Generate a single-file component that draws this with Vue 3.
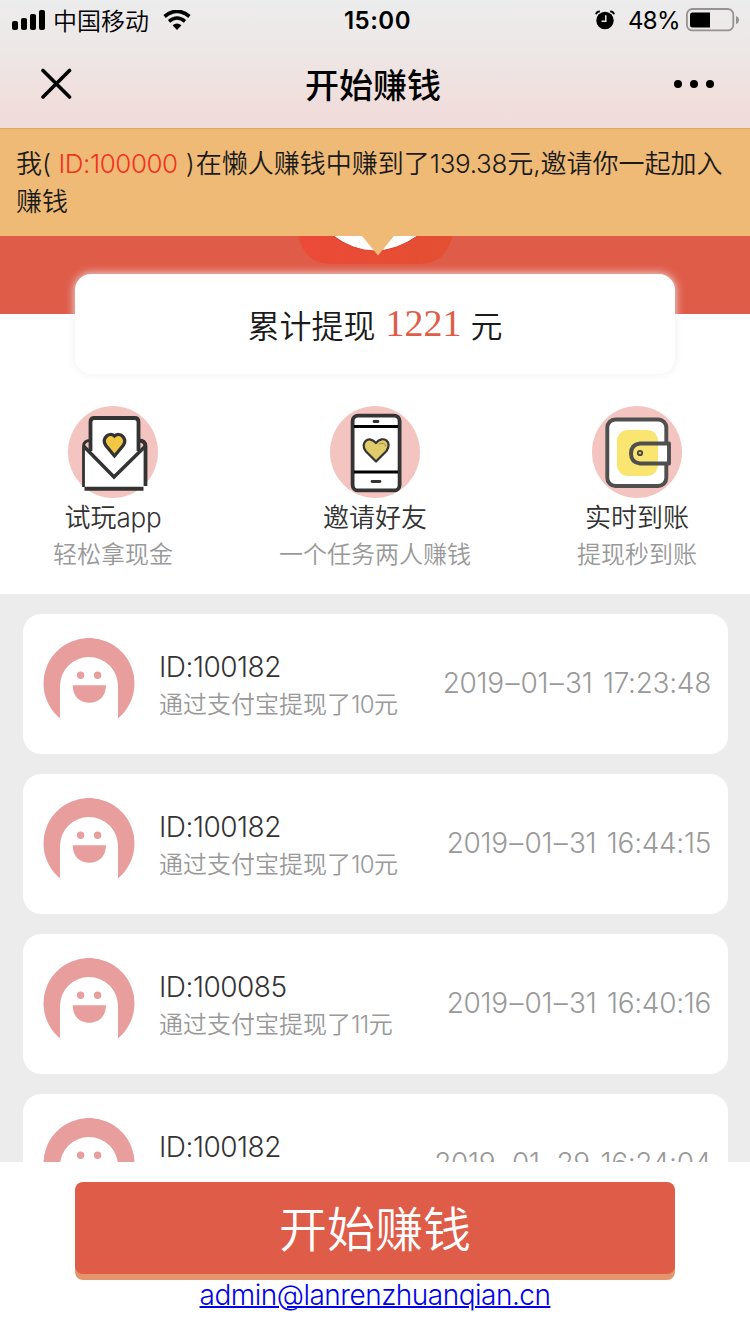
<script setup>
const records = [
  { id: '100182', amount: '10', date: ['2019', '01', '31'], time: '17:23:48' },
  { id: '100182', amount: '10', date: ['2019', '01', '31'], time: '16:44:15' },
  { id: '100085', amount: '11', date: ['2019', '01', '31'], time: '16:40:16' },
  { id: '100182', amount: '10', date: ['2019', '01', '29'], time: '16:24:04' },
]
</script>

<template>
  <div class="page">
    <header class="top">
      <div class="status">
        <div class="carrier">
          <svg width="34" height="20" viewBox="0 0 34 20">
            <rect x="0" y="11" width="6" height="9" rx="2" />
            <rect x="9" y="8" width="6" height="12" rx="2" />
            <rect x="18" y="4" width="6" height="16" rx="2" />
            <rect x="27" y="0" width="6" height="20" rx="2" />
          </svg>
          <span class="operator">中国移动</span>
          <svg width="28" height="20" viewBox="0 0 28 20">
            <path d="M1.6 6.5Q14 -3.7 26.4 6.5" fill="none" stroke="#000" stroke-width="3.8" />
            <path d="M6 11.3Q14 4.7 22 11.3" fill="none" stroke="#000" stroke-width="3.5" />
            <path d="M9.5 15.2Q14 11.8 18.5 15.2L14 20Z" />
          </svg>
        </div>
        <span class="clock">15:00</span>
        <div class="power">
          <svg class="alarm" width="20" height="20" viewBox="0 0 20 20">
            <circle cx="10" cy="10.5" r="8.7" />
            <path d="M.9 4.3Q1.5 1.5 4.9 1.3M15.1 1.3Q18.5 1.5 19.1 4.3" fill="none" stroke="#000" stroke-width="1.8" />
            <path d="M10.8 5.2V11.2H6.6" fill="none" stroke="#eceaea" stroke-width="1.5" />
          </svg>
          <span class="percent">48%</span>
          <svg width="54" height="24" viewBox="0 0 54 24">
            <rect x=".9" y="1" width="46.4" height="21.4" rx="5.5" fill="none" stroke="#969292" stroke-width="1.8" />
            <path d="M6.5 4.500H24V19.500H6.500Q4 19.500 4 17V7Q4 4.500 6.500 4.500Z" />
            <path d="M50 8Q53 9 53 12Q53 15 50 16Z" fill="#969292" />
          </svg>
        </div>
      </div>
      <nav class="nav">
        <svg width="32" height="32" viewBox="0 0 32 32">
          <path d="M3 2.5L29.5 29M29.5 2.5L3 29" stroke="#000" stroke-width="3.6" stroke-linecap="round" />
        </svg>
        <h1>开始赚钱</h1>
        <svg width="42" height="10" viewBox="0 0 42 10">
          <circle cx="5" cy="5" r="4" /><circle cx="21" cy="5" r="4" /><circle cx="37" cy="5" r="4" />
        </svg>
      </nav>
    </header>

    <section class="notice">
      <p><span>我( </span><span class="uid">ID:100000</span><span class="close"> )</span><span>在懒人赚钱中赚到了</span><span class="sum">139.38</span><span>元,邀请你一起加入</span></p>
      <p>赚钱</p>
    </section>

    <section class="hero">
      <svg class="logo" width="156" height="28" viewBox="0 0 156 28">
        <defs>
          <linearGradient id="logo-red"><stop offset="0" stop-color="#eb4a38" /><stop offset="1" stop-color="#e44f32" /></linearGradient>
        </defs>
        <path d="M.5 0H154.500C149 20 138 28 121 28H34C17 28 5 20 .5 0Z" fill="url(#logo-red)" />
        <path d="M34 -1Q76 31 121 -1Z" fill="#fff" stroke="#df3c2a" stroke-width="1" />
        <path d="M64 0H96L80 19.5Z" fill="#efba76" />
      </svg>
    </section>
    <div class="total">累计提现<b>1221</b>元</div>

    <section class="features">
      <div class="feature">
        <svg width="90" height="92" viewBox="0 0 90 92">
          <ellipse cx="45" cy="46" rx="45" ry="46" fill="#f4c5c0" />
          <path d="M16 43L46 66L77 43V81L74 83H18L16 81Z" fill="#fff" />
          <path d="M15.500 81V40Q16 34.500 22 34.500" fill="none" stroke="#333" stroke-width="2.800" />
          <path d="M71 34.500Q77 34.500 77.500 40V80" fill="none" stroke="#333" stroke-width="3.800" />
          <path d="M22 45V14Q22 11 25 11H68Q71 11 71 14V45L46 70Z" fill="#fff" />
          <path d="M22.500 45V16Q22.500 12 26.500 12H66.500Q70.500 12 70.500 16V45" fill="none" stroke="#333" stroke-width="3.800" />
          <path d="M16 40.500L46 71L77 40.500" fill="none" stroke="#333" stroke-width="3.500" />
          <path d="M16.500 82.700H75.500" stroke="#333" stroke-width="4" />
          <path d="M46.500 50L37.500 39C33.500 32 41 25.500 46.500 30C52 25.500 59.500 32 55.500 39Z" fill="#f2c744" stroke="#333" stroke-width="3.300" />
        </svg>
        <h2>试玩<span class="latin">app</span></h2>
        <p>轻松拿现金</p>
      </div>
      <div class="feature">
        <svg width="90" height="92" viewBox="0 0 90 92">
          <ellipse cx="45" cy="46" rx="45" ry="46" fill="#f4c5c0" />
          <rect x="22.6" y="9.6" width="47" height="74.8" rx="5.5" fill="#fff" stroke="#343434" stroke-width="3.8" />
          <path d="M24 20.5H68M24 66H68" stroke="#000" stroke-width="3" />
          <path d="M44 15.5H48M42 75.5H50" stroke="#333" stroke-width="2.8" stroke-linecap="round" />
          <path d="M46 55.5L36 45.5C29 37 39 28.500 46 37C53 28.500 63 36 56.500 45Z" fill="#e0cc6b" stroke="#333" stroke-width="2.2" stroke-linejoin="round" />
          <path d="M49 38Q55 36 56 40.500" fill="none" stroke="#8c7a3b" stroke-width=".8" />
        </svg>
        <h2>邀请好友</h2>
        <p>一个任务两人赚钱</p>
      </div>
      <div class="feature">
        <svg width="90" height="92" viewBox="0 0 90 92">
          <ellipse cx="45" cy="46" rx="45" ry="46" fill="#f4c5c0" />
          <rect x="15.300" y="13.500" width="59" height="66.500" rx="8" fill="#fff" stroke="#4f4f4f" stroke-width="3.900" />
          <rect x="25" y="24" width="41" height="46" rx="11" fill="#fae570" />
          <path d="M48 37.500H77V57.500H48Q39 56 39 47.500Q39 39 48 37.500Z" fill="#fff" />
          <path d="M48 37.500H66V57.500H48Q39 56 39 47.500Q39 39 48 37.500Z" fill="#fae570" />
          <path d="M77 37.500H48Q39 38.500 39 47.500Q39 56.500 48 57.500H77Z" fill="none" stroke="#4f4f4f" stroke-width="3.900" stroke-linejoin="round" />
          <circle cx="48" cy="47" r="2.200" fill="#d9c461" stroke="#444" stroke-width="1.800" />
        </svg>
        <h2>实时到账</h2>
        <p>提现秒到账</p>
      </div>
    </section>

    <main class="records">
      <article v-for="(r, i) in records" :key="i" class="record">
        <svg width="92" height="92" viewBox="0 0 92 92">
          <path d="M17 80.500A45.500 45.500 0 1 1 75 80.500V48A29 29 0 0 0 17 48Z" fill="#e89e9d" />
          <circle cx="37.600" cy="37.300" r="3.700" fill="#e89e9d" /><circle cx="54.600" cy="37.300" r="3.700" fill="#e89e9d" />
          <path d="M29.700 47.300H63C63 59 55 64.800 46.300 64.800S29.700 59 29.700 47.300Z" fill="#e89e9d" />
        </svg>
        <div class="info">
          <h3>ID:{{ r.id }}</h3>
          <p>通过支付宝提现了<span class="amount">{{ r.amount }}</span>元</p>
        </div>
        <time>{{ r.date[0] }}<span class="dash">–</span>{{ r.date[1] }}<span class="dash">–</span>{{ r.date[2] }} {{ r.time }}</time>
      </article>
    </main>

    <footer class="bottom">
      <button type="button">开始赚钱</button>
      <a href="mailto:admin@lanrenzhuanqian.cn">admin@lanrenzhuanqian.cn</a>
    </footer>
  </div>
</template>

<style>
body { margin: 0; overflow: hidden; }
</style>

<style scoped>
.page {
  width: 750px;
  height: 1334px;
  overflow: hidden;
  display: flex;
  flex-direction: column;
  background: #fff;
  color: #1a1a1a;
  font-family: Inter, "Noto Sans CJK SC", sans-serif;
  font-weight: 350;
}
h1, h2, h3, p { margin: 0; font-weight: inherit; }
svg { display: block; flex: none; }
.page > * { flex: none; }
.top { height: 128px; background: linear-gradient(#ececec 0, #ede8e7 35%, #f0dedc 80%, #f0dcdb); color: #000; }
.status { height: 40px; display: grid; grid-template-columns: 1fr auto 1fr; align-items: center; padding: 0 10px 0 12px; }
.carrier, .power { display: flex; align-items: center; }
.operator { font-size: 24px; line-height: 36px; padding-top: 3px; margin: 0 14px 0 7px; }
.power { justify-content: flex-end; }
.clock { font-size: 24px; font-weight: 600; letter-spacing: .5px; padding: 1px 0 0 3px; }
.percent { font-size: 24px; font-weight: 400; letter-spacing: -.6px; padding-top: 1px; margin: 0 6px 0 13px; }
.nav { height: 88px; display: flex; justify-content: space-between; align-items: center; padding: 0 35px 0 40px; }
.nav h1 { font-size: 34px; font-weight: 500; line-height: 84px; padding: 4px 0 0 1px; }
.notice { height: 108px; box-sizing: border-box; padding: 16px 16px 0; background: #efba76; border-top: 1px solid #dba765; font-size: 26px; line-height: 38px; white-space: nowrap; }
.notice p { white-space: pre; }
.uid { color: #f2321f; letter-spacing: -.45px; }
.close { letter-spacing: .8px; }
.sum { letter-spacing: -.3px; }
.latin { letter-spacing: -.2px; }
.amount { letter-spacing: -.6px; }
.hero { height: 78px; background: #df5c49; }
.logo { margin-left: 298px; }
.total { position: relative; width: 600px; height: 100px; margin: -40px auto 0; border-radius: 16px; background: #fff; box-shadow: 0 0 10px #eee; display: flex; justify-content: center; align-items: center; font-size: 32px; }
.total b { font: 400 38px/48px "Liberation Serif", serif; color: #df5c49; margin: 0 9px 2px 10px; }
.features { height: 220px; box-sizing: border-box; padding: 32px 53px 0; display: flex; justify-content: space-between; }
.feature { display: flex; flex-direction: column; align-items: center; }
.feature h2 { margin-top: 1px; font-size: 26px; line-height: 38px; color: #333; }
.feature p { font-size: 24px; line-height: 36px; color: #999; }
.records { height: 568px; box-sizing: border-box; overflow: hidden; padding: 20px 22px 0 23px; background: #ececec; display: flex; flex-direction: column; gap: 20px; }
.record { flex: none; height: 140px; box-sizing: border-box; padding: 0 17px 0 20px; border-radius: 18px; background: #fff; display: flex; align-items: center; }
.info { flex: 1; margin: 3px 0 0 24px; }
.info h3 { font-size: 28px; line-height: 38px; letter-spacing: -.5px; color: #333; }
.info p { font-size: 24px; line-height: 38px; color: #999; }
.record time { font-size: 28px; line-height: 40px; letter-spacing: -.3px; word-spacing: 3px; margin-bottom: 2px; color: #999; }
.dash { margin: 0 1.5px; }
.bottom { height: 172px; box-sizing: border-box; padding-top: 20px; display: flex; flex-direction: column; align-items: center; background: #fff; }
.bottom button { width: 600px; height: 92px; border: 0; border-radius: 8px; background: #df5c49; box-shadow: 0 6px #e5956b; color: #fff; font: 350 48px/92px Inter, "Noto Sans CJK SC", sans-serif; padding: 2px 0 0; }
.bottom a { margin-top: 4px; font-size: 28px; line-height: 34px; letter-spacing: -.5px; color: #0000ee; text-decoration-thickness: 2px; }
</style>
